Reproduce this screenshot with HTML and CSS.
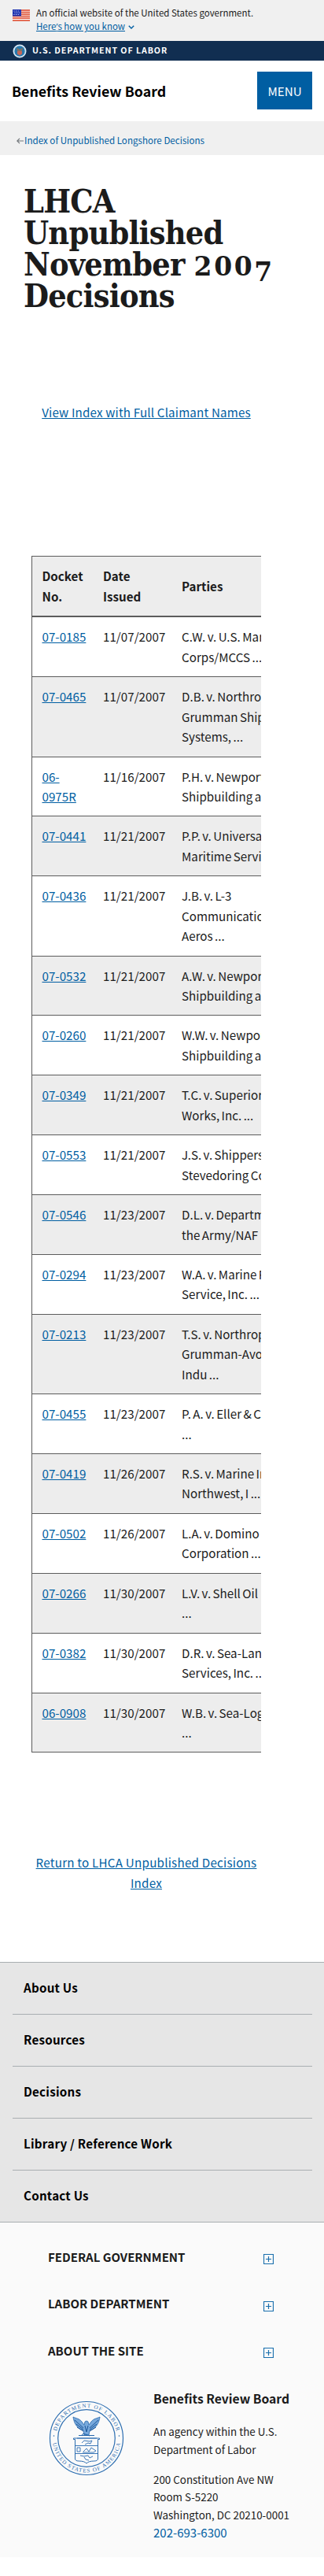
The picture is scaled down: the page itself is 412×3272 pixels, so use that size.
FILE: index.html
```html
<!DOCTYPE html>
<html lang="en">
<head>
<meta charset="utf-8">
<meta name="viewport" content="width=device-width, initial-scale=1">
<title>LHCA Unpublished November 2007 Decisions</title>
<link rel="stylesheet" href="styles.css">
</head>
<body>
<div class="gov-banner">
  <svg class="flag" width="22" height="15" viewBox="0 0 22 15"><rect width="22" height="15" fill="#fff"/><path d="M0 1h22M0 3.5h22M0 6h22M0 8.5h22M0 11h22M0 14h22" stroke="#db3e1f" stroke-width="1.3"/><rect width="11" height="8.5" fill="#1e33b1"/><path d="M1.5 2h8M2.5 4.2h8M1.5 6.5h8" stroke="#fff" stroke-width=".9" stroke-dasharray="1 1.6"/></svg>
  <div>
    <p class="gov-text">An official website of the United States government.</p>
    <p class="gov-how"><a href="#">Here<span class="apos">’</span>s how you know</a><svg width="8" height="5" viewBox="0 0 8 5"><path d="M.8.8 4 4 7.200.8" fill="none" stroke="#005ea2" stroke-width="1.4"/></svg></p>
  </div>
</div>
<div class="dol-bar">
  <svg width="18" height="18" viewBox="0 0 18 18"><circle cx="9" cy="9" r="8.500" fill="#d9e8f6"/><circle cx="9" cy="9" r="6.700" fill="#2879ad"/><path d="M5 4.500 9 7l4-2.500-1 4-3 1.500-3-1.500z" fill="#87705f"/><path d="M6 9h6v3.500l-3 2-3-2z" fill="#c5675a"/></svg>
  <span>U.S. DEPARTMENT OF LABOR</span>
</div>
<header class="site-header">
  <a class="site-name" href="#">Benefits Review Board</a>
  <button class="menu-button">MENU</button>
</header>
<nav class="breadcrumb">
  <svg width="9" height="8" viewBox="0 0 9 8"><path d="M9 4H1M4 .8.8 4 4 7.200" fill="none" stroke="#71767a" stroke-width="1.2"/></svg>
  <a href="#">Index of Unpublished Longshore Decisions</a>
</nav>
<main class="main">
  <h1>LHCA<br>Unpublished<br>November <span class="old-fig">200<span class="low">7</span></span><br>Decisions</h1>
  <p class="index-link"><a href="#">View Index with Full Claimant Names</a></p>
  <div class="table-clip">
    <table class="decisions">
      <thead><tr><th class="c-docket">Docket<br>No.</th><th class="c-date">Date<br>Issued</th><th class="c-party">Parties</th></tr></thead>
      <tbody>
      <tr><td><a href="#">07-0185</a></td><td>11/07/2007</td><td>C.W. v. U.S. Marine<br>Corps/MCCS ...</td></tr>
      <tr><td><a href="#">07-0465</a></td><td>11/07/2007</td><td>D.B. v. Northrop<br>Grumman Ship<br>Systems, ...</td></tr>
      <tr><td><a href="#">06-<br>0975R</a></td><td>11/16/2007</td><td>P.H. v. Newport News<br>Shipbuilding and</td></tr>
      <tr><td><a href="#">07-0441</a></td><td>11/21/2007</td><td>P.P. v. Universal<br>Maritime Service</td></tr>
      <tr><td><a href="#">07-0436</a></td><td>11/21/2007</td><td>J.B. v. L-3<br>Communications<br>Aeros ...</td></tr>
      <tr><td><a href="#">07-0532</a></td><td>11/21/2007</td><td>A.W. v. Newport News<br>Shipbuilding and</td></tr>
      <tr><td><a href="#">07-0260</a></td><td>11/21/2007</td><td>W.W. v. Newport News<br>Shipbuilding and</td></tr>
      <tr><td><a href="#">07-0349</a></td><td>11/21/2007</td><td>T.C. v. Superior<br>Works, Inc. ...</td></tr>
      <tr><td><a href="#">07-0553</a></td><td>11/21/2007</td><td>J.S. v. Shippers<br>Stevedoring Co</td></tr>
      <tr><td><a href="#">07-0546</a></td><td>11/23/2007</td><td>D.L. v. Department of<br>the Army/NAF</td></tr>
      <tr><td><a href="#">07-0294</a></td><td>11/23/2007</td><td>W.A. v. Marine Repair<br>Service, Inc. ...</td></tr>
      <tr><td><a href="#">07-0213</a></td><td>11/23/2007</td><td>T.S. v. Northrop<br>Grumman-Avondale<br>Indu ...</td></tr>
      <tr><td><a href="#">07-0455</a></td><td>11/23/2007</td><td>P. A. v. Eller &amp; Co<br>...</td></tr>
      <tr><td><a href="#">07-0419</a></td><td>11/26/2007</td><td>R.S. v. Marine Industries<br>Northwest, I ...</td></tr>
      <tr><td><a href="#">07-0502</a></td><td>11/26/2007</td><td>L.A. v. Domino Sugar<br>Corporation ...</td></tr>
      <tr><td><a href="#">07-0266</a></td><td>11/30/2007</td><td>L.V. v. Shell Oil<br>...</td></tr>
      <tr><td><a href="#">07-0382</a></td><td>11/30/2007</td><td>D.R. v. Sea-Land<br>Services, Inc. ...</td></tr>
      <tr><td><a href="#">06-0908</a></td><td>11/30/2007</td><td>W.B. v. Sea-Logix<br>...</td></tr>
      </tbody>
    </table>
  </div>
  <p class="return-link"><a href="#">Return to LHCA Unpublished Decisions<br>Index</a></p>
</main>
<nav class="footer-menu">
  <a href="#">About Us</a>
  <a href="#">Resources</a>
  <a href="#">Decisions</a>
  <a href="#">Library / Reference Work</a>
  <a href="#">Contact Us</a>
</nav>
<footer class="footer">
  <div class="fold"><h2>FEDERAL GOVERNMENT</h2><svg class="plus" width="13" height="13" viewBox="0 0 13 13"><path d="M.5.5h12v12H.5zM6.500 3v7M3 6.500h7" fill="none" stroke="#1a6fad" stroke-width="1.2"/></svg></div>
  <div class="fold"><h2>LABOR DEPARTMENT</h2><svg class="plus" width="13" height="13" viewBox="0 0 13 13"><path d="M.5.5h12v12H.5zM6.500 3v7M3 6.500h7" fill="none" stroke="#1a6fad" stroke-width="1.2"/></svg></div>
  <div class="fold"><h2>ABOUT THE SITE</h2><svg class="plus" width="13" height="13" viewBox="0 0 13 13"><path d="M.5.5h12v12H.5zM6.500 3v7M3 6.500h7" fill="none" stroke="#1a6fad" stroke-width="1.2"/></svg></div>
  <div class="identity">
    <svg class="seal" width="96" height="96" viewBox="0 0 96 96">
      <defs><path id="arc-top" d="M9 48a39 39 0 0 1 78 0"/><path id="arc-low" d="M4.500 48a43.500 43.500 0 0 0 87 0"/></defs>
      <g fill="none" stroke="#2c6db0"><circle cx="48" cy="48" r="46.500" stroke-width="1.2"/><circle cx="48" cy="48" r="36.300" stroke-width="1.200"/></g>
      <g class="seal-text"><text><textPath href="#arc-top" startOffset="50%" text-anchor="middle" textLength="104">DEPARTMENT OF LABOR</textPath></text><text><textPath href="#arc-low" startOffset="50%" text-anchor="middle" textLength="124">UNITED STATES OF AMERICA</textPath></text></g>
      <circle cx="6.500" cy="45" r=".8" fill="#2c6db0"/><circle cx="89.500" cy="45" r=".8" fill="#2c6db0"/>
      <path d="M31 21c4 2 8 2 11 6l3 4 1-4 2-1 2 1 1 4 3-4c3-4 7-4 11-6-1 7-4 13-10 16l-3 1-1 6h-6l-1-6-3-1c-6-3-9-9-10-16z" fill="#78a9dc" stroke="#2566ab" stroke-width=".8"/>
      <path d="m33 25 11 10M35 30l9 7M36 34l8 5M63 25 52 35M61 30l-9 7M60 34l-8 5M46 32l2 8 2-8" fill="none" stroke="#1c5699" stroke-width="1"/>
      <path d="M38 44.500h20M41 45l3-3 8 3" fill="none" stroke="#2566ab"/>
      <path d="M31.500 48h33v1.500h-2V74q0 3-5 3-7 0-9.500 3-2.500-3-9.500-3-5 0-5-3V49.500h-2z" fill="none" stroke="#2c6db0"/>
      <path d="M34 57.500h28M34 67.500h28M42 54l3-3 7 1 3-1-2 4-3-1-4 2M36 60h4v5h-4zm8 5 4-4 3 4 3-5 6 4-3 2H43M40 70l5 1 5-1 2 3 4-2M45 72l2 3 4 1M36 48h25" fill="none" stroke="#3c78b8" stroke-width="1"/>
    </svg>
    <div class="contact">
      <h3>Benefits Review Board</h3>
      <p>An agency within the U.S.<br>Department of Labor</p>
      <address>200 Constitution Ave NW<br>Room S-5220<br>Washington, DC 20210-0001<br><a class="tel" href="#">202-693-6300</a></address>
    </div>
  </div>
</footer>
</body>
</html>
```
FILE: styles.css
```css
* { box-sizing: border-box; }
body { margin: 0; background: #fff; color: #1b1b1b; font-family: "Noto Sans CJK SC", "Noto Sans", sans-serif; font-size: 15.2px; line-height: 25.44px; }
p, h1, h2, h3 { margin: 0; }
a { color: #005ea2; }
.gov-banner { display: flex; gap: 8px; height: 52px; padding: 8px 16px 0; background: #f0f0f0; }
.flag { margin-top: 4px; }
.gov-text, .gov-how { font-size: 11.5px; line-height: 17.4px; white-space: nowrap; }
.gov-how { display: flex; align-items: center; gap: 4px; }
.apos { font-family: "Open Sans", sans-serif; line-height: 1; }
.dol-bar { display: flex; align-items: center; gap: 7px; height: 24.5px; padding: 1px 16px 0; background: #112e51; color: #fff; font-size: 10.7px; font-weight: 700; letter-spacing: .9px; line-height: 20px; white-space: nowrap; }
.dol-bar span { padding-bottom: 2px; }
.site-header { display: flex; align-items: center; justify-content: space-between; height: 77.5px; padding: 0 15px 0 15px; }
.site-name { color: #000; font-size: 17.8px; font-weight: 700; text-decoration: none; white-space: nowrap; }
.menu-button { width: 70px; height: 48px; padding: 0; border: 0; background: #005ea2; color: #fff; font: 15.2px/48px "Noto Sans CJK SC", sans-serif; }
.breadcrumb { display: flex; align-items: center; gap: 1px; height: 43px; padding: 6px 21px 0; background: #f0f0f0; font-size: 11.6px; white-space: nowrap; }
.breadcrumb a { text-decoration: none; }
.main { padding: 39px 30px 0; }
h1 { font: bold 41px/40px "DejaVu Serif Condensed", "DejaVu Serif", serif; letter-spacing: -.8px; white-space: nowrap; }
.old-fig { font-family: "DejaVu Serif", serif; font-size: 33px; letter-spacing: 2.6px; line-height: 1; }
.low { position: relative; top: 7px; }
.index-link { margin: 115px 50px 0 10px; letter-spacing: .15px; text-align: center; white-space: nowrap; }
.table-clip { width: 292px; margin: 170px 0 0 10px; overflow: hidden; }
.decisions { width: 340px; table-layout: fixed; border-collapse: collapse; border: 1px solid #5c5c5c; }
.decisions th, .decisions td { padding: 12px 0 12px 12.500px; border-bottom: 1px solid #5c5c5c; text-align: left; vertical-align: top; white-space: nowrap; word-spacing: -1px; }
.decisions th { border-bottom-width: 2px; vertical-align: middle; background: #ededed; }
.decisions tbody tr:nth-child(even) td { background: #ededed; }
.c-docket { width: 78px; }
.c-date { width: 100px; }
.return-link { margin: 127px 50px 0 10px; padding-bottom: 88px; letter-spacing: .22px; text-align: center; white-space: nowrap; }
.footer-menu { padding: 0 15px 0 16px; border-top: 1px solid #a9aeb1; border-bottom: 1px solid #a9aeb1; background: #e6e6e6; }
.footer-menu a { display: block; height: 66px; padding: 19px 14px 0; border-bottom: 1px solid #a9aeb1; color: #000; font-weight: 700; letter-spacing: .22px; text-decoration: none; }
.footer-menu a:last-child { border-bottom: 0; height: 65px; }
.footer { height: 425px; padding: 13.5px 61px 0; background: #fafafa; }
.fold { display: flex; align-items: center; height: 59.500px; padding-right: 3px; justify-content: space-between; }
.fold h2 { font-size: 15px; font-weight: 700; }
.plus { margin-top: 6px; }
.identity { display: flex; gap: 37px; white-space: nowrap; }
.seal { margin: 34px 0 0 1px; flex: none; }
.seal-text { font: 7px "Liberation Serif", serif; fill: #2c6db0; }
.contact { padding-top: 17px; font-size: 13.400px; line-height: 22.700px; }
.contact h3 { font-size: 15.700px; line-height: 30px; }
.contact p { margin-top: 15px; }
.contact address { margin-top: 15px; font-style: normal; }
.tel { font-size: 15px; text-decoration: none; }
```
